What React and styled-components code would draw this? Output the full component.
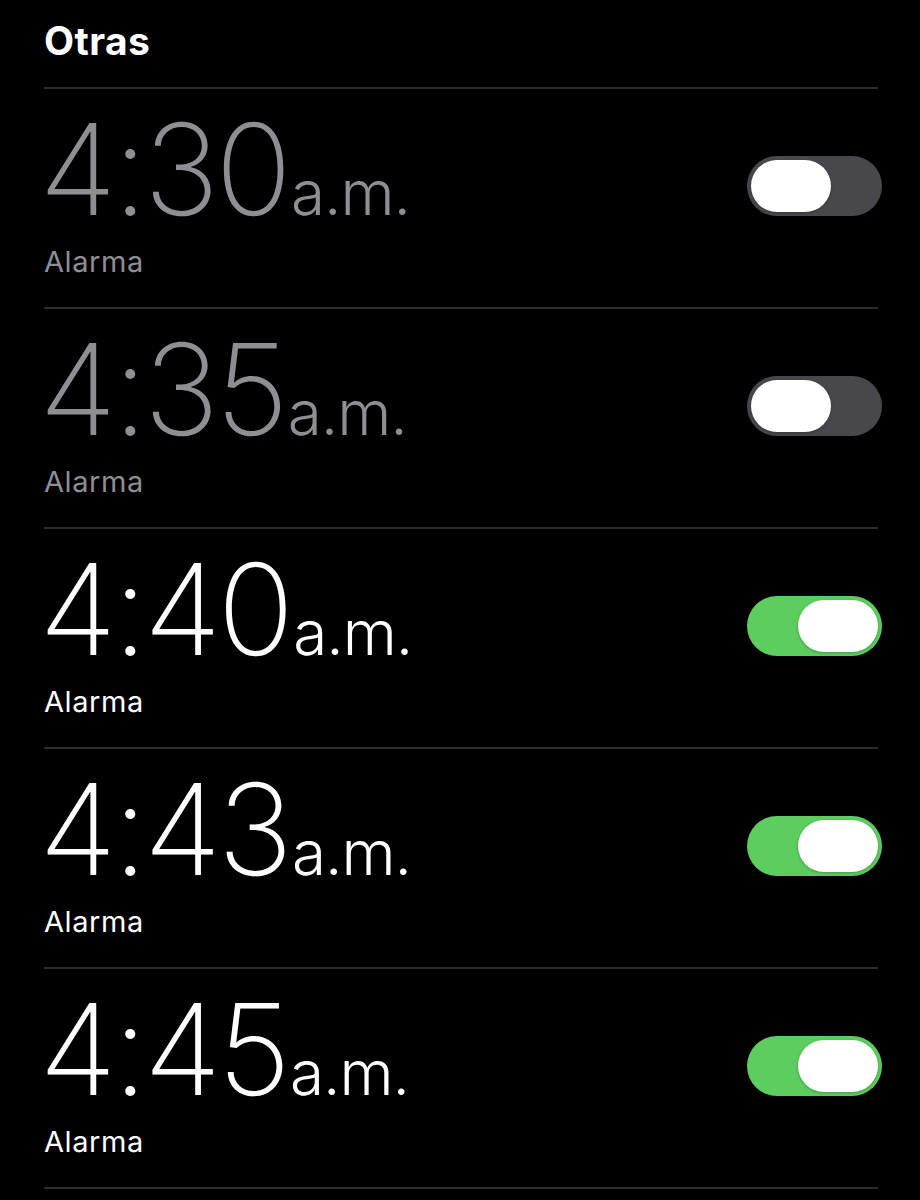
import React from "react";
import styled, { createGlobalStyle } from "styled-components";

const GlobalStyle = createGlobalStyle`
  html, body {
    margin: 0;
    padding: 0;
    background: #000;
  }
  body {
    font-family: Inter, "Liberation Sans", sans-serif;
    -webkit-font-smoothing: antialiased;
  }
`;

const Screen = styled.div`
  width: 920px;
  min-height: 1200px;
  background: #000;
  padding: 0 42px 0 44px;
  box-sizing: border-box;
  overflow: hidden;
`;

const SectionTitle = styled.h2`
  margin: 0;
  padding-top: 18px;
  height: 89px;
  box-sizing: border-box;
  font-size: 39px;
  font-weight: 700;
  letter-spacing: 0.4px;
  line-height: 45px;
  color: #fff;
  border-bottom: 2px solid #2c2c2e;
`;

const Row = styled.div`
  display: flex;
  align-items: flex-start;
  justify-content: space-between;
  height: 220px;
  box-sizing: border-box;
  border-bottom: 2px solid #2c2c2e;
`;

const Info = styled.div`
  display: flex;
  flex-direction: column;
  padding-top: 17px;
  color: ${(p) => (p.$on ? "#fff" : "#8e8e93")};
`;

const Time = styled.div`
  font-size: 127px;
  font-weight: 200;
  line-height: 127px;
  letter-spacing: -4px;
  margin-left: -5px;
  white-space: nowrap;
`;

const Suffix = styled.span`
  font-size: 62px;
  font-weight: 300;
  line-height: 62px;
  letter-spacing: -1px;
  margin-left: 3px;
`;

const Label = styled.div`
  font-size: 29px;
  font-weight: 400;
  line-height: 34px;
  letter-spacing: 0.6px;
  margin-top: 12px;
`;

const Track = styled.div`
  display: flex;
  align-items: center;
  justify-content: ${(p) => (p.$on ? "flex-end" : "flex-start")};
  width: 135px;
  height: 60px;
  padding: 0 4px;
  box-sizing: border-box;
  margin: 67px -4px 0 0;
  border-radius: 30px;
  background: ${(p) => (p.$on ? "#5ccd5e" : "#48484c")};
`;

const Knob = styled.div`
  width: 80px;
  height: 52px;
  border-radius: 26px;
  background: #fff;
  box-shadow: 0 1px 3px rgba(0, 0, 0, 0.25);
`;

const alarms = [
  { time: "4:30", on: false },
  { time: "4:35", on: false },
  { time: "4:40", on: true },
  { time: "4:43", on: true },
  { time: "4:45", on: true },
];

const Toggle = ({ on }) => (
  <Track $on={on}>
    <Knob />
  </Track>
);

export default function App() {
  return (
    <>
      <GlobalStyle />
      <Screen>
        <SectionTitle>Otras</SectionTitle>
        {alarms.map((a) => (
          <Row key={a.time}>
            <Info $on={a.on}>
              <Time>
                {a.time}
                <Suffix>a.m.</Suffix>
              </Time>
              <Label>Alarma</Label>
            </Info>
            <Toggle on={a.on} />
          </Row>
        ))}
      </Screen>
    </>
  );
}
